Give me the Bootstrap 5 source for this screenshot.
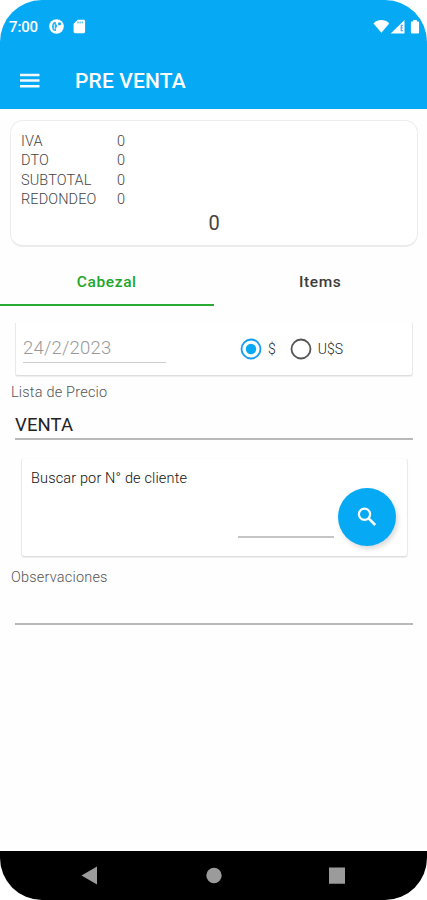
<!DOCTYPE html>
<html lang="es">
<head>
<meta charset="utf-8">
<meta name="viewport" content="width=device-width, initial-scale=1">
<title>Pre venta</title>
<link href="https://cdn.jsdelivr.net/npm/bootstrap@5.3.0/dist/css/bootstrap.min.css" rel="stylesheet">
<style>
  body { font-family: Roboto, "Noto Sans", sans-serif; background: #fff; overflow: hidden; }
  svg { display: block; flex: none; }
  .phone { width: 427px; height: 900px; border-radius: 42px; background: #fefefe; }
  .topbar { height: 109px; background: #05a9f4; }
  .status { height: 53px; padding: 0 6px 0 9px; }
  .clock { font-size: 15px; font-weight: 500; line-height: 20px; width: 40px; letter-spacing: -.15px; }
  .appbar { height: 56px; padding-left: 20px; }
  .app-title { font-size: 21px; font-weight: 500; line-height: 28px; margin-left: 35px; letter-spacing: .15px; }
  .summary { height: 127px; margin: 11px 9px 0 10px; padding: 10.5px 10px 0 10px; border: 1px solid #ededed; border-bottom: 2px solid #ebebeb; border-radius: 13px; background: #fff; }
  .totals { font-size: 14.5px; font-weight: 300; line-height: 19.5px; color: #444; }
  .totals dt { width: 96px; font-weight: 300; letter-spacing: .1px; }
  .total { font-size: 20px; line-height: 24px; color: #444; margin-top: 1.5px; }
  .tabs { height: 60px; }
  .tabs .nav-link { height: 59px; padding: 15px 0 0; border-radius: 0; font-size: 15.5px; font-weight: 500; letter-spacing: .6px; color: #3c3c3c; border-bottom: 2px solid transparent; }
  .tabs .nav-link.active { color: #20a62b; border-bottom-color: #27ab32; }
  .box { background: #fff; border: 1px solid #f4f4f4; border-color: #fbfbfb #e9e9e9 #dedede #e9e9e9; box-shadow: 0 1px 1px #eee; }
  .date-box { height: 53px; margin: 16px 14px 0 15px; padding-left: 7px; border-top: 0; border-radius: 0 0 3px 3px; }
  .date { width: 143px; height: 28px; margin-bottom: 1px; font-size: 18.5px; line-height: 27px; font-weight: 300; color: #999; letter-spacing: .2px; border-bottom: 1px solid #ccc; }
  .currency { margin-left: 74px; font-size: 14px; font-weight: 300; color: #222; }
  .currency .mark-label { margin-left: 6px; }
  .currency .second { margin-left: 14px; }
  .caption { font-size: 14.5px; line-height: 20px; font-weight: 300; color: #555; margin-left: 11px; letter-spacing: .2px; }
  .line { margin: 0 14px 0 15px; border-bottom: 2px solid #b9b9b9; }
  .price { height: 37px; padding-top: 9px; font-size: 18.5px; line-height: 26px; color: #222; letter-spacing: .1px; font-weight: 400; }
  .client { height: 99px; margin: 18px 19px 0 21px; border-radius: 4px; padding: 10px 11px 0 9px; }
  .client-label { font-size: 14.5px; line-height: 20px; font-weight: 300; color: #111; letter-spacing: .15px; }
  .client-no { width: 96px; height: 49px; border-bottom: 2px solid #c5c5c5; }
  .find { width: 58px; height: 58px; margin-top: -1px; background: #05a9f4; box-shadow: 2px 3px 5px rgba(0,0,0,.15); }
  .find:hover { background: #05a9f4; }
  .notes { height: 37px; }
  .notes-label { margin-top: 11px; }
  .price-label { margin-top: 7px; }
  .sysbar { height: 49px; background: #000; }
</style>
</head>
<body>
<main class="phone overflow-hidden d-flex flex-column">
  <header class="topbar text-white">
    <div class="status d-flex align-items-center">
      <span class="clock">7:00</span>
      <svg width="15" height="15" viewBox="0 0 15 15"><circle cx="7.5" cy="7.5" r="7.3" fill="#fff"/><path d="M6.9 3H5.7C3.9 3.5 3 5.3 3 7.5s.9 4 2.7 4.5h1.2V8.6h1.2V5.4H6.9z" fill="#05a9f4" fill-opacity=".85"/><path d="M5.4 5.2v5" stroke="#fff" stroke-width=".8"/><rect x="9.2" y="3.6" width="2.7" height="2.7" rx=".7" fill="#05a9f4"/></svg>
      <svg class="ms-2" width="15" height="15" viewBox="0 0 15 15"><path d="M5.7.7h6c.8 0 1.4.6 1.4 1.4v10.7c0 .8-.6 1.4-1.4 1.4H3c-.8 0-1.4-.6-1.4-1.4V4.8z" fill="#fff"/><path d="M6 2.6v1.8M8.1 2.6v1.8M10.2 2.6v1.8" stroke="#05a9f4"/></svg>
      <svg class="ms-auto" width="48" height="16" viewBox="0 0 48 16"><g fill="#fff"><path d="M.5 4.4C4.8 0 12 0 16.2 4.4L8.4 13.8z"/><path d="M17.7 14.5 31.5 1v13.5z"/><path d="M39.8 2.5h1.4V1h3.6v1.5h1.4c.5 0 .9.4.9.9v10.2c0 .5-.4.9-.9.9h-6.4c-.5 0-.9-.4-.9-.9V3.4c0-.5.4-.9.9-.9z" transform="translate(-1)"/></g><path d="M30 6.2h-1.8v5.6H30M28.2 8.8h1.6" fill="none" stroke="#4d9ae6" stroke-width="1.1"/></svg>
    </div>
    <div class="appbar d-flex align-items-center">
      <svg width="20" height="16" viewBox="0 0 20 16"><path d="M0 2h19.5M0 7.6h19.5M0 13.2h19.5" stroke="#fff" stroke-opacity=".95" stroke-width="2.5"/></svg>
      <h1 class="app-title mb-0">PRE VENTA</h1>
    </div>
  </header>

  <section class="summary flex-shrink-0">
    <dl class="totals mb-0">
      <div class="d-flex"><dt>IVA</dt><dd class="mb-0">0</dd></div>
      <div class="d-flex"><dt>DTO</dt><dd class="mb-0">0</dd></div>
      <div class="d-flex"><dt>SUBTOTAL</dt><dd class="mb-0">0</dd></div>
      <div class="d-flex"><dt>REDONDEO</dt><dd class="mb-0">0</dd></div>
    </dl>
    <div class="total text-center">0</div>
  </section>

  <nav class="tabs nav nav-fill flex-shrink-0">
    <a class="nav-link active w-50 d-flex align-items-center justify-content-center" href="#">Cabezal</a>
    <a class="nav-link w-50 d-flex align-items-center justify-content-center" href="#">Items</a>
  </nav>

  <section class="flex-grow-1">
    <div class="box date-box d-flex align-items-center">
      <div class="date">24/2/2023</div>
      <div class="currency d-flex align-items-center">
        <svg width="22" height="22" viewBox="0 0 22 22"><circle cx="11" cy="11" r="9.5" fill="none" stroke="#139df0" stroke-width="1.8"/><circle cx="11" cy="11" r="5.2" fill="#05a9f4"/></svg>
        <span class="mark-label">$</span>
        <svg class="second" width="22" height="22" viewBox="0 0 22 22"><circle cx="11" cy="11" r="9.5" fill="none" stroke="#555" stroke-width="1.8"/></svg>
        <span class="mark-label">U$S</span>
      </div>
    </div>
    <div class="caption price-label">Lista de Precio</div>
    <div class="line price">VENTA</div>
    <div class="box client">
      <div class="client-label">Buscar por N° de cliente</div>
      <div class="d-flex justify-content-end gap-1">
        <div class="client-no"></div>
        <button class="find btn rounded-circle border-0 p-0 d-flex align-items-center justify-content-center" type="button" aria-label="Buscar">
          <svg width="20" height="20" viewBox="0 0 20 20"><circle cx="7.5" cy="7.2" r="5.6" fill="none" stroke="#fff" stroke-width="2.2"/><path d="m11.6 11.4 6.6 6.6" stroke="#fff" stroke-width="2.6"/></svg>
        </button>
      </div>
    </div>
    <div class="caption notes-label">Observaciones</div>
    <div class="line notes"></div>
  </section>

  <footer class="sysbar flex-shrink-0">
    <svg width="427" height="49" viewBox="0 0 427 49" fill="#9b9b9b"><path d="M81.5 24.5 97 15.5v18z"/><circle cx="214" cy="24.5" r="7.7"/><path d="M329 16.5h16v16.3h-16z"/></svg>
  </footer>
</main>
<script src="https://cdn.jsdelivr.net/npm/bootstrap@5.3.0/dist/js/bootstrap.bundle.min.js"></script>
</body>
</html>
